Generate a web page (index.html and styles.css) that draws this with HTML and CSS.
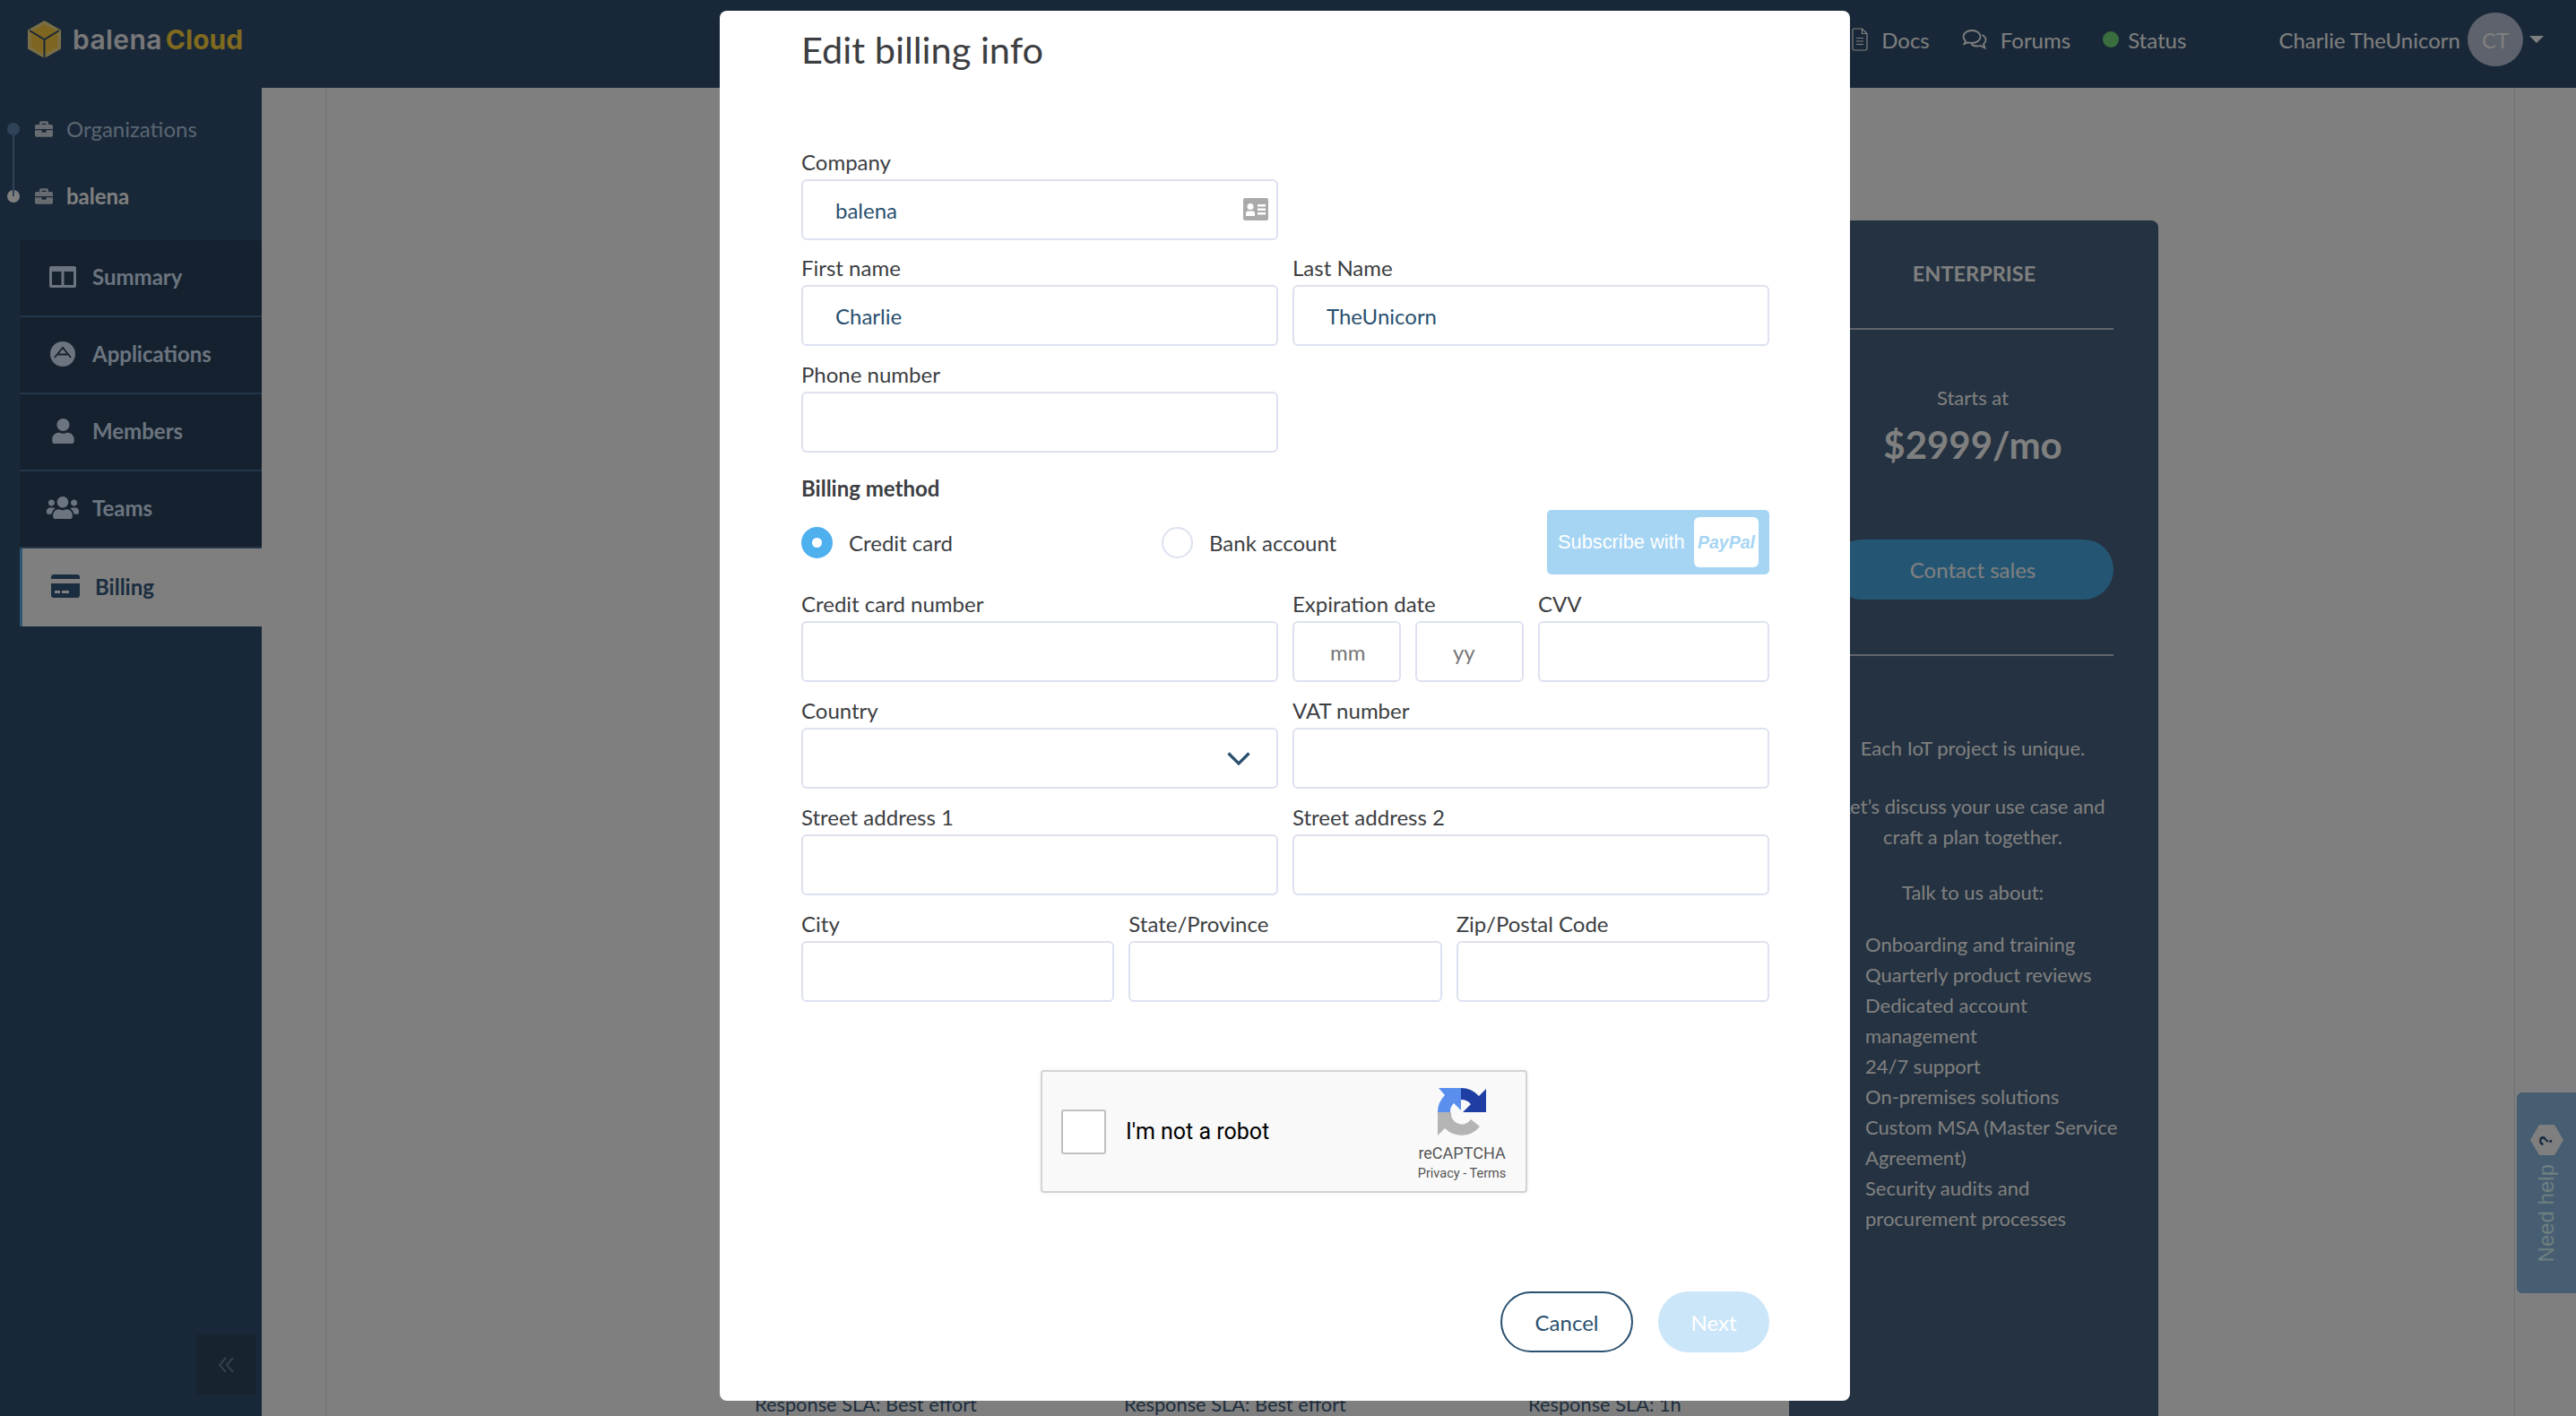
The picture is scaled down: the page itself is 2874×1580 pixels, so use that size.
FILE: index.html
```html
<!DOCTYPE html>
<html lang="en">
<head>
    <meta charset="UTF-8">
    <title>Edit billing info - balenaCloud</title>
    <link rel="stylesheet" href="styles.css">
</head>
<body>
    <header class="topbar">
        <div class="logo">
            <svg class="logo-cube" viewBox="0 0 37 42">
                <path d="M18.5 0L37 10.5V31.5L18.5 42L0 31.5V10.5Z" fill="#f2dc8c"/>
                <path d="M18.5 4L33.5 12.5V29.5L18.5 38L3.500 29.5V12.5Z" fill="#ffcc40"/>
                <path d="M2 11L18.500 21L35 11M18.500 21V42" fill="none" stroke="#325070" stroke-width="2"/>
            </svg>
            <span class="logo-balena">balena</span><span class="logo-cloud">Cloud</span>
        </div>
        <nav class="topnav">
            <svg class="topnav-icon docs-icon" viewBox="0 0 18 26" fill="none" stroke="#fff" stroke-width="1.200">
                <path d="M2.500 1H11.500L17 6.500V23.500Q17 25 15.500 25H2.500Q1 25 1 23.500V2.500Q1 1 2.500 1ZM11.500 1V6.500H17M5 11.500H13M5 15H13M5 18.500H13"/>
            </svg>
            <span class="topnav-link docs-link">Docs</span>
            <svg class="topnav-icon forums-icon" viewBox="0 0 28 24" fill="none" stroke="#fff" stroke-width="1.800">
                <path d="M11 2C5.500 2 1.500 5 1.500 9C1.500 11 2.500 12.500 4 13.700L2.500 17L7 15.300C8.300 15.700 9.500 16 11 16C16.500 16 20.500 13 20.500 9C20.500 5 16.500 2 11 2Z"/>
                <path d="M22.500 7C25 8.200 26.500 10.200 26.500 12.500C26.500 14.500 25.500 16 24 17.200L25.500 21.500L20.500 19C19.200 19.400 18 19.500 16.500 19.500C14 19.500 12 18.800 10.500 17.500"/>
            </svg>
            <span class="topnav-link forums-link">Forums</span>
            <span class="status-dot"></span>
            <span class="topnav-link status-link">Status</span>
            <span class="topnav-link user-name">Charlie TheUnicorn</span>
            <span class="avatar">CT</span>
            <span class="caret"></span>
        </nav>
    </header>

    <div class="page">
        <aside class="sidebar">
            <div class="crumb crumb-muted">
                <span class="crumb-dot"></span>
                <svg class="crumb-icon" viewBox="0 0 512 512"><path d="M320 336c0 8.840-7.160 16-16 16h-96c-8.840 0-16-7.160-16-16v-48H0v144c0 25.600 22.400 48 48 48h416c25.600 0 48-22.400 48-48V288H320v48zm144-208h-80V80c0-25.600-22.400-48-48-48H176c-25.600 0-48 22.400-48 48v48H48c-25.600 0-48 22.400-48 48v80h512v-80c0-25.600-22.400-48-48-48zm-144 0H192V96h128v32z"/></svg>
                <span>Organizations</span>
            </div>
            <div class="crumb crumb-active">
                <span class="crumb-dot"></span>
                <svg class="crumb-icon" viewBox="0 0 512 512"><path d="M320 336c0 8.840-7.160 16-16 16h-96c-8.840 0-16-7.160-16-16v-48H0v144c0 25.600 22.400 48 48 48h416c25.600 0 48-22.400 48-48V288H320v48zm144-208h-80V80c0-25.600-22.400-48-48-48H176c-25.600 0-48 22.400-48 48v48H48c-25.600 0-48 22.400-48 48v80h512v-80c0-25.600-22.400-48-48-48zm-144 0H192V96h128v32z"/></svg>
                <span>balena</span>
            </div>

            <ul class="side-menu">
                <li class="side-item">
                    <span class="side-icon"><svg width="30" height="24" viewBox="0 0 30 24"><path fill-rule="evenodd" d="M2 0H28Q30 0 30 2V22Q30 24 28 24H2Q0 24 0 22V2Q0 0 2 0ZM3 6V21H13.500V6ZM16.500 6V21H27V6Z"/></svg></span>
                    Summary
                </li>
                <li class="side-item">
                    <span class="side-icon"><svg width="28" height="28" viewBox="0 0 28 28"><circle cx="14" cy="14" r="14"/><path d="M5 18L14 7L23 18M9 14.500H19" fill="none" stroke="#2a425c" stroke-width="1.800"/></svg></span>
                    Applications
                </li>
                <li class="side-item">
                    <span class="side-icon"><svg width="25" height="28" viewBox="0 0 448 512"><path d="M224 256c70.700 0 128-57.300 128-128S294.700 0 224 0 96 57.300 96 128s57.300 128 128 128zm89.600 32h-16.700c-22.200 10.200-46.900 16-72.900 16s-50.600-5.800-72.900-16h-16.700C60.200 288 0 348.200 0 422.400V464c0 26.500 21.500 48 48 48h352c26.500 0 48-21.500 48-48v-41.600c0-74.200-60.200-134.400-134.400-134.400z"/></svg></span>
                    Members
                </li>
                <li class="side-item">
                    <span class="side-icon"><svg width="36" height="29" viewBox="0 0 640 512"><path d="M96 224c35.300 0 64-28.700 64-64s-28.700-64-64-64-64 28.700-64 64 28.700 64 64 64zm448 0c35.300 0 64-28.700 64-64s-28.700-64-64-64-64 28.700-64 64 28.700 64 64 64zm32 32h-64c-17.600 0-33.500 7.100-45.100 18.600 40.300 22.100 68.900 62 75.100 109.400h66c17.700 0 32-14.300 32-32v-32c0-35.300-28.700-64-64-64zm-256 0c61.900 0 112-50.100 112-112S381.900 32 320 32 208 82.100 208 144s50.100 112 112 112zm76.800 32h-8.300c-20.800 10-43.900 16-68.500 16s-47.600-6-68.500-16h-8.300C179.600 288 128 339.600 128 403.200V432c0 26.500 21.500 48 48 48h288c26.500 0 48-21.500 48-48v-28.800c0-63.600-51.600-115.200-115.200-115.200zm-223.700-13.400C161.500 263.100 145.600 256 128 256H64c-35.300 0-64 28.700-64 64v32c0 17.700 14.300 32 32 32h65.900c6.300-47.400 34.900-87.300 75.200-109.400z"/></svg></span>
                    Teams
                </li>
                <li class="side-item side-item-active">
                    <span class="side-icon"><svg width="32" height="26" viewBox="0 0 32 26"><path d="M3 0H29Q32 0 32 3V5H0V3Q0 0 3 0ZM0 10H32V23Q32 26 29 26H3Q0 26 0 23ZM4 18V21H10V18ZM12 18V21H20V18Z" fill-rule="evenodd"/></svg></span>
                    Billing
                </li>
            </ul>

            <div class="collapse-btn">
                <svg width="20" height="18" viewBox="0 0 20 18" fill="none" stroke="#6d8199" stroke-width="2"><path d="M9 1L2 9L9 17M17 1L10 9L17 17"/></svg>
            </div>
        </aside>

        <main class="main">
            <div class="main-inner">
                <div class="plan plan-free"><div class="plan-sla">Response SLA: Best effort</div></div>
                <div class="plan plan-pro"><div class="plan-sla">Response SLA: Best effort</div></div>
                <div class="plan plan-prod"><div class="plan-sla">Response SLA: 1h</div></div>

                <section class="enterprise">
                    <div class="ent-title">ENTERPRISE</div>
                    <div class="ent-price-wrap">
                        <div class="ent-starts">Starts at</div>
                        <div class="ent-price">$2999/mo</div>
                    </div>
                    <div class="ent-btn">Contact sales</div>
                    <div class="ent-body">
                        <p class="ent-first">Each IoT project is unique.</p>
                        <p class="ent-discuss">Let’s discuss your use case and craft a plan together.</p>
                        <p class="ent-talk">Talk to us about:</p>
                        <ul class="ent-list">
                            <li>Onboarding and training</li>
                            <li>Quarterly product reviews</li>
                            <li>Dedicated account management</li>
                            <li>24/7 support</li>
                            <li>On-premises solutions</li>
                            <li>Custom MSA (Master Service Agreement)</li>
                            <li>Security audits and procurement processes</li>
                        </ul>
                    </div>
                </section>
            </div>
        </main>
    </div>

    <div class="help-tab">
        <span class="help-text">Need help</span>
        <svg class="help-hex" viewBox="0 0 37 34">
            <path d="M10 0H27L37 17L27 34H10L0 17Z" fill="#fff"/>
            <text x="18.500" y="18" transform="rotate(-90 18.500 18)" text-anchor="middle" dominant-baseline="middle" class="help-mark">?</text>
        </svg>
    </div>

    <div class="overlay"></div>

    <div class="modal">
        <h1 class="modal-title">Edit billing info</h1>

        <div class="row row-company">
            <div class="field half">
                <label>Company</label>
                <div class="input-wrap">
                    <input class="input" type="text" value="balena">
                    <svg class="input-icon contact-icon" viewBox="0 0 28 25">
                        <path fill-rule="evenodd" fill="#aaa" d="M2 0H26Q28 0 28 2V23Q28 25 26 25H2Q0 25 0 23V2Q0 0 2 0ZM8 6A3.500 3.500 0 1 0 8 13A3.500 3.500 0 1 0 8 6ZM3 20H13V17Q13 14.500 10.500 14.500H5.500Q3 14.500 3 17ZM16 7V9.500H25V7ZM16 11.500V14H25V11.500ZM16 16V18.500H25V16Z"/>
                    </svg>
                </div>
            </div>
        </div>

        <div class="row">
            <div class="field">
                <label>First name</label>
                <input class="input" type="text" value="Charlie">
            </div>
            <div class="field">
                <label>Last Name</label>
                <input class="input" type="text" value="TheUnicorn">
            </div>
        </div>

        <div class="row row-last-contact">
            <div class="field half">
                <label>Phone number</label>
                <input class="input" type="text">
            </div>
        </div>

        <div class="method-title">Billing method</div>
        <div class="method-row">
            <div class="radio-option">
                <span class="radio radio-on"></span>
                Credit card
            </div>
            <div class="radio-option">
                <span class="radio"></span>
                Bank account
            </div>
            <div class="paypal-btn">
                <span class="paypal-label">Subscribe with</span>
                <span class="paypal-box"><span class="paypal-word">PayPal</span></span>
            </div>
        </div>

        <div class="row">
            <div class="field">
                <label>Credit card number</label>
                <input class="input" type="text">
            </div>
            <div class="field">
                <div class="row-inner">
                    <div class="field">
                        <label>Expiration date</label>
                        <div class="row-inner">
                            <input class="input input-date" type="text" placeholder="mm">
                            <input class="input input-date" type="text" placeholder="yy">
                        </div>
                    </div>
                    <div class="field">
                        <label>CVV</label>
                        <input class="input" type="text">
                    </div>
                </div>
            </div>
        </div>

        <div class="row">
            <div class="field">
                <label>Country</label>
                <div class="input-wrap">
                    <input class="input" type="text">
                    <svg class="input-icon chevron-icon" viewBox="0 0 26 15" fill="none" stroke="#2a506f" stroke-width="3.200"><path d="M1.500 1.500L13 13L24.500 1.500"/></svg>
                </div>
            </div>
            <div class="field">
                <label>VAT number</label>
                <input class="input" type="text">
            </div>
        </div>

        <div class="row">
            <div class="field">
                <label>Street address 1</label>
                <input class="input" type="text">
            </div>
            <div class="field">
                <label>Street address 2</label>
                <input class="input" type="text">
            </div>
        </div>

        <div class="row">
            <div class="field">
                <label>City</label>
                <input class="input" type="text">
            </div>
            <div class="field">
                <label>State/Province</label>
                <input class="input" type="text">
            </div>
            <div class="field">
                <label>Zip/Postal Code</label>
                <input class="input" type="text">
            </div>
        </div>

        <div class="captcha">
            <span class="captcha-box"></span>
            <span class="captcha-text">I'm not a robot</span>
            <div class="captcha-brand">
                <svg class="captcha-logo" viewBox="0 0 54 54">
                    <path fill="#b4b4b4" d="M0 27H15A12 12 0 0 0 37 35L47 43A26 26 0 0 1 8 45L0 53Z"/>
                    <path fill="#1f3ea3" d="M26 0A27 27 0 0 1 46 9L54 1V27H28L37 18A14 14 0 0 0 26 13Z"/>
                    <path fill="#5a8fee" d="M0 27A27 27 0 0 1 8 8L1 0H26V25L18 17A13 13 0 0 0 14 27Z"/>
                </svg>
                <div class="captcha-name">reCAPTCHA</div>
                <div class="captcha-links">Privacy - Terms</div>
            </div>
        </div>

        <div class="modal-actions">
            <button class="btn btn-cancel">Cancel</button>
            <button class="btn btn-next">Next</button>
        </div>
    </div>
</body>
</html>
```

FILE: styles.css
```css
* {
    box-sizing: border-box;
}
html, body {
    margin: 0;
    height: 1580px;
    overflow: hidden;
}
body {
    font-family: Lato, "Noto Sans", sans-serif;
    font-size: 24px;
    background-color: #fff;
    color: #3c3e42;
    position: relative;
}

/* top bar */
.topbar {
    height: 98px;
    background-color: #325070;
    display: flex;
    align-items: center;
    padding: 0 36px 10px 31px;
}
.logo {
    display: flex;
    align-items: center;
    font-family: Inter, sans-serif;
    font-weight: 600;
    font-size: 30px;
}
.logo-cube {
    width: 37px;
    height: 42px;
    margin-right: 13px;
}
.logo-balena {
    color: #f0f0f5;
    margin-right: 4px;
    letter-spacing: 0.4px;
}
.logo-cloud {
    color: #ffd43e;
    font-weight: 700;
}
.topnav {
    margin-left: auto;
    display: flex;
    align-items: center;
    color: #fff;
}
.topnav-icon {
    display: block;
}
.docs-icon {
    width: 18px;
    height: 26px;
    margin-right: 15px;
}
.docs-link {
    margin-right: 36px;
}
.forums-icon {
    width: 28px;
    height: 24px;
    margin-right: 15px;
}
.forums-link {
    margin-right: 36px;
}
.status-dot {
    width: 18px;
    height: 18px;
    border-radius: 50%;
    background-color: #74dc7e;
    margin-right: 10px;
}
.status-link {
    margin-right: 103px;
}
.user-name {
    margin-right: 8px;
}
.avatar {
    width: 62px;
    height: 60px;
    border-radius: 50%;
    background-color: #bcc4d8;
    display: flex;
    align-items: center;
    justify-content: center;
    margin-right: 7px;
}
.caret {
    width: 0;
    height: 0;
    border-left: 8px solid transparent;
    border-right: 8px solid transparent;
    border-top: 8px solid #fff;
}

/* layout */
.page {
    display: flex;
    height: 1482px;
}
.sidebar {
    width: 292px;
    flex-shrink: 0;
    background-color: #325070;
    padding-top: 8px;
    display: flex;
    flex-direction: column;
}
.crumb {
    position: relative;
    height: 75px;
    padding-left: 8px;
    display: flex;
    align-items: center;
    color: #b4cae0;
}
.crumb-active {
    color: #fff;
    font-weight: 700;
}
.crumb-dot {
    width: 14px;
    height: 14px;
    border-radius: 50%;
    background-color: #5c86b0;
    margin-right: 16px;
}
.crumb-active .crumb-dot {
    background-color: #fff;
}
.crumb-active::before {
    content: "";
    position: absolute;
    left: 14px;
    top: -37px;
    width: 2px;
    height: 75px;
    background-color: #5c86b0;
}
.crumb-icon {
    width: 22px;
    height: 20px;
    margin-right: 14px;
    fill: #cfd8e2;
}
.side-menu {
    list-style: none;
    margin: 12px 0 0 22px;
    padding: 0;
}
.side-item {
    height: 86px;
    padding: 0 0 3px 30px;
    display: flex;
    align-items: center;
    gap: 15px;
    background-color: #2a425c;
    border-bottom: 2px solid #486c94;
    color: #d6e8ff;
    font-weight: 700;
}
.side-icon {
    width: 36px;
    display: flex;
    justify-content: center;
    fill: #d6e8ff;
}
.side-item-active {
    height: 87px;
    background-color: #fff;
    border-bottom: none;
    border-left: 3px solid #56b0e8;
    color: #345a80;
}
.side-item-active .side-icon {
    fill: #345a80;
}
.collapse-btn {
    width: 67px;
    height: 67px;
    margin: auto 6px 24px auto;
    background-color: #2e465e;
    display: flex;
    align-items: center;
    justify-content: center;
}

/* plans behind the modal */
.main {
    flex: 1;
    padding: 0 68px 0 71px;
}
.main-inner {
    height: 100%;
    border-left: 1px solid #dde1f0;
    border-right: 1px solid #dde1f0;
    padding: 148px 0 0 478px;
    display: flex;
    align-items: flex-start;
    overflow: hidden;
}
.plan {
    height: 1334px;
    flex-shrink: 0;
    display: flex;
    flex-direction: column;
    justify-content: flex-end;
}
.plan-free {
    width: 412px;
}
.plan-pro {
    width: 451px;
}
.plan-prod {
    width: 291px;
}
.plan-sla {
    font-size: 21.800px;
    line-height: 26px;
    color: #3a5a7a;
}
.enterprise {
    width: 412px;
    height: 1400px;
    flex-shrink: 0;
    background-color: #486482;
    border-radius: 8px 8px 0 0;
    padding: 0 50px 0 48px;
    color: #fff;
    text-align: center;
    font-size: 22px;
    line-height: 34px;
}
.ent-title {
    height: 122px;
    padding: 42px 0 0 3px;
    border-bottom: 2px solid #c4c8d8;
    font-weight: 700;
    font-size: 23.500px;
}
.ent-price-wrap {
    padding-top: 62px;
}
.ent-starts {
    line-height: 28px;
}
.ent-price {
    font-size: 42px;
    font-weight: 700;
    line-height: 56px;
    margin-top: 10px;
}
.ent-btn {
    height: 67px;
    margin-top: 78px;
    border-radius: 34px;
    background-color: #48ace6;
    line-height: 67px;
    font-size: 24px;
}
.ent-body {
    margin-top: 61px;
    border-top: 2px solid #c4c8d8;
    padding-top: 86px;
}
.ent-body p {
    margin: 0;
}
.ent-body .ent-discuss {
    margin-top: 31px;
}
.ent-body .ent-talk {
    margin-top: 28px;
}
.ent-list {
    list-style: none;
    margin: 24px -12px 0 0;
    padding: 0 0 0 37px;
    text-align: left;
}

.help-tab {
    position: absolute;
    right: 0;
    top: 1219px;
    width: 66px;
    height: 224px;
    background-color: #8cbae4;
    border-radius: 6px 0 0 6px;
    display: flex;
    flex-direction: column-reverse;
    align-items: center;
    padding: 36px 0 0;
    justify-content: flex-end;
    gap: 10px;
    font-family: "Liberation Sans", Arial, sans-serif;
    color: #dff;
    font-size: 24px;
}
.help-text {
    writing-mode: vertical-rl;
    transform: rotate(180deg);
}
.help-hex {
    width: 37px;
    height: 34px;
}
.help-mark {
    font-size: 20px;
    font-weight: 700;
    fill: #345a80;
}

/* modal */
.overlay {
    position: fixed;
    inset: 0;
    background-color: rgba(0, 0, 0, 0.5);
}
.modal {
    position: absolute;
    left: 803px;
    top: 12px;
    width: 1261px;
    height: 1551px;
    padding: 18px 90px 0 91px;
    background-color: #fff;
    border-radius: 8px;
}
.modal-title {
    margin: 0 0 89px;
    font-size: 41.500px;
    line-height: 50px;
    font-weight: 400;
}
.row {
    display: flex;
    gap: 16px;
    margin-bottom: 20px;
}
.row-inner {
    display: flex;
    gap: 16px;
}
.row-company {
    margin-bottom: 19px;
}
.row-last-contact {
    margin-bottom: 28px;
}
.field {
    flex: 1 1 0;
    min-width: 0;
}
.half {
    flex: 0 0 532px;
}
.field label {
    display: block;
    line-height: 24px;
    margin-bottom: 7px;
}
.input {
    display: block;
    width: 100%;
    height: 68px;
    min-width: 0;
    padding: 0 36px;
    border: 2px solid #dde1f0;
    border-radius: 6px;
    font: inherit;
    color: #2a506f;
    background-color: #fff;
    outline: none;
}
.input-date {
    padding: 0 0 0 40px;
    flex: 1 1 0;
}
.input-date::placeholder {
    color: #777;
    opacity: 1;
}
.input-wrap {
    position: relative;
}
.input-icon {
    position: absolute;
}
.contact-icon {
    right: 11px;
    top: 21px;
    width: 28px;
    height: 25px;
}
.chevron-icon {
    right: 31px;
    top: 27px;
    width: 26px;
    height: 15px;
}
.method-title {
    font-weight: 700;
    line-height: 24px;
}
.method-row {
    height: 72px;
    margin: 12px 0 21px;
    display: flex;
    align-items: center;
}
.radio-option {
    width: 402px;
    display: flex;
    align-items: center;
    gap: 18px;
}
.radio {
    width: 35px;
    height: 35px;
    border-radius: 50%;
    border: 2px solid #dde1f0;
    display: flex;
    align-items: center;
    justify-content: center;
}
.radio-on {
    background-color: #4fb0ee;
    border-color: #4fb0ee;
}
.radio-on::after {
    content: "";
    width: 11px;
    height: 11px;
    border-radius: 50%;
    background-color: #fff;
}
.paypal-btn {
    margin-left: auto;
    width: 248px;
    height: 72px;
    padding: 0 12px;
    border-radius: 5px;
    background-color: #a6d5f4;
    display: flex;
    align-items: center;
    justify-content: space-between;
    font-family: "Liberation Sans", Arial, sans-serif;
    color: #fff;
}
.paypal-label {
    font-size: 21.800px;
}
.paypal-box {
    width: 72px;
    height: 56px;
    background-color: #fff;
    border-radius: 6px;
    display: flex;
    align-items: center;
    justify-content: center;
}
.paypal-word {
    font-size: 19.500px;
    font-weight: 700;
    font-style: italic;
    color: #a6d5f4;
}
.captcha {
    width: 543px;
    height: 137px;
    margin: 76px 0 0 267px;
    padding: 0 0 0 21px;
    background-color: #f9f9f9;
    border: 2px solid #d3d3d3;
    border-radius: 4px;
    box-shadow: 0 0 4px rgba(0, 0, 0, 0.08);
    display: flex;
    align-items: center;
    font-family: Roboto, sans-serif;
    color: #000;
}
.captcha-box {
    width: 50px;
    height: 50px;
    background-color: #fff;
    border: 2px solid #c1c1c1;
    border-radius: 3px;
    margin-right: 22px;
}
.captcha-text {
    font-size: 25px;
}
.captcha-brand {
    margin-left: auto;
    width: 110px;
    margin-right: 16px;
    padding-top: 10px;
    display: flex;
    flex-direction: column;
    align-items: center;
    color: #555;
}
.captcha-logo {
    width: 54px;
    height: 54px;
    margin-bottom: 8px;
}
.captcha-name {
    font-size: 18px;
    line-height: 22px;
}
.captcha-links {
    font-size: 14.500px;
    line-height: 24px;
}
.modal-actions {
    margin-top: 110px;
    display: flex;
    justify-content: flex-end;
    gap: 28px;
}
.btn {
    height: 68px;
    border-radius: 34px;
    font: inherit;
    padding: 0;
}
.btn-cancel {
    width: 148px;
    background-color: #fff;
    border: 2px solid #2a506f;
    color: #2a506f;
}
.btn-next {
    width: 124px;
    background-color: #cbe6f9;
    border: none;
    color: #fff;
}
```
